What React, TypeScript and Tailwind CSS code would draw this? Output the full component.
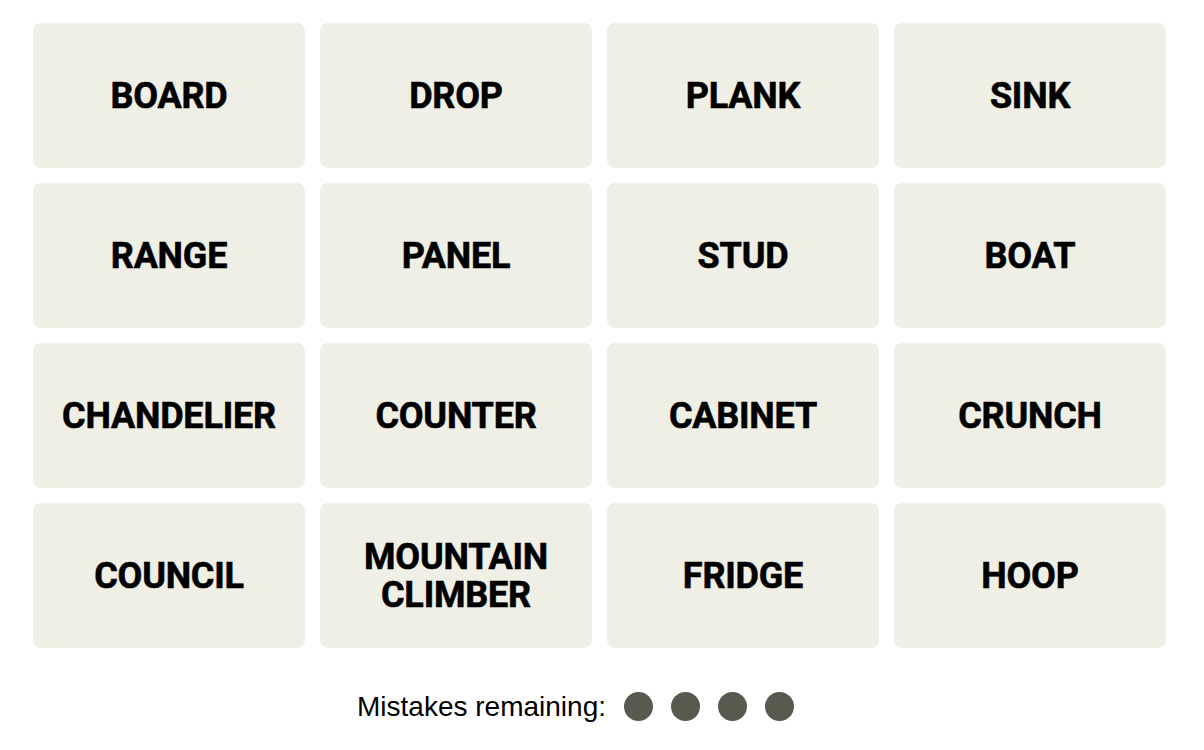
const words = [
  "BOARD", "DROP", "PLANK", "SINK",
  "RANGE", "PANEL", "STUD", "BOAT",
  "CHANDELIER", "COUNTER", "CABINET", "CRUNCH",
  "COUNCIL", "MOUNTAIN CLIMBER", "FRIDGE", "HOOP",
];

export default function App() {
  return (
    <div className="min-h-[750px] w-[1204px] bg-white pl-[33px] pt-[23px]" style={{ fontFamily: "Roboto, 'Liberation Sans', sans-serif" }}>
      <div className="grid grid-cols-[repeat(4,272px)] auto-rows-[145px] gap-[15px]">
        {words.map((w) => (
          <div
            key={w}
            className="flex items-center justify-center rounded-[8px] bg-[#efefe6] px-2 text-center text-[36px] font-bold leading-[38px] tracking-[-0.2px] text-black [-webkit-text-stroke:0.6px_black]"
          >
            {w === "MOUNTAIN CLIMBER" ? (
              <span>MOUNTAIN<br />CLIMBER</span>
            ) : (
              w
            )}
          </div>
        ))}
      </div>

      <div className="mt-[44px] flex items-center pl-[324px]">
        <span className="text-[28px] leading-none text-black" style={{ fontFamily: "'Liberation Sans', sans-serif" }}>
          Mistakes remaining:
        </span>
        <div className="ml-[18px] flex gap-[18px]">
          {[0, 1, 2, 3].map((i) => (
            <span key={i} className="size-[29px] rounded-full bg-[#5a594e]" />
          ))}
        </div>
      </div>
    </div>
  );
}
